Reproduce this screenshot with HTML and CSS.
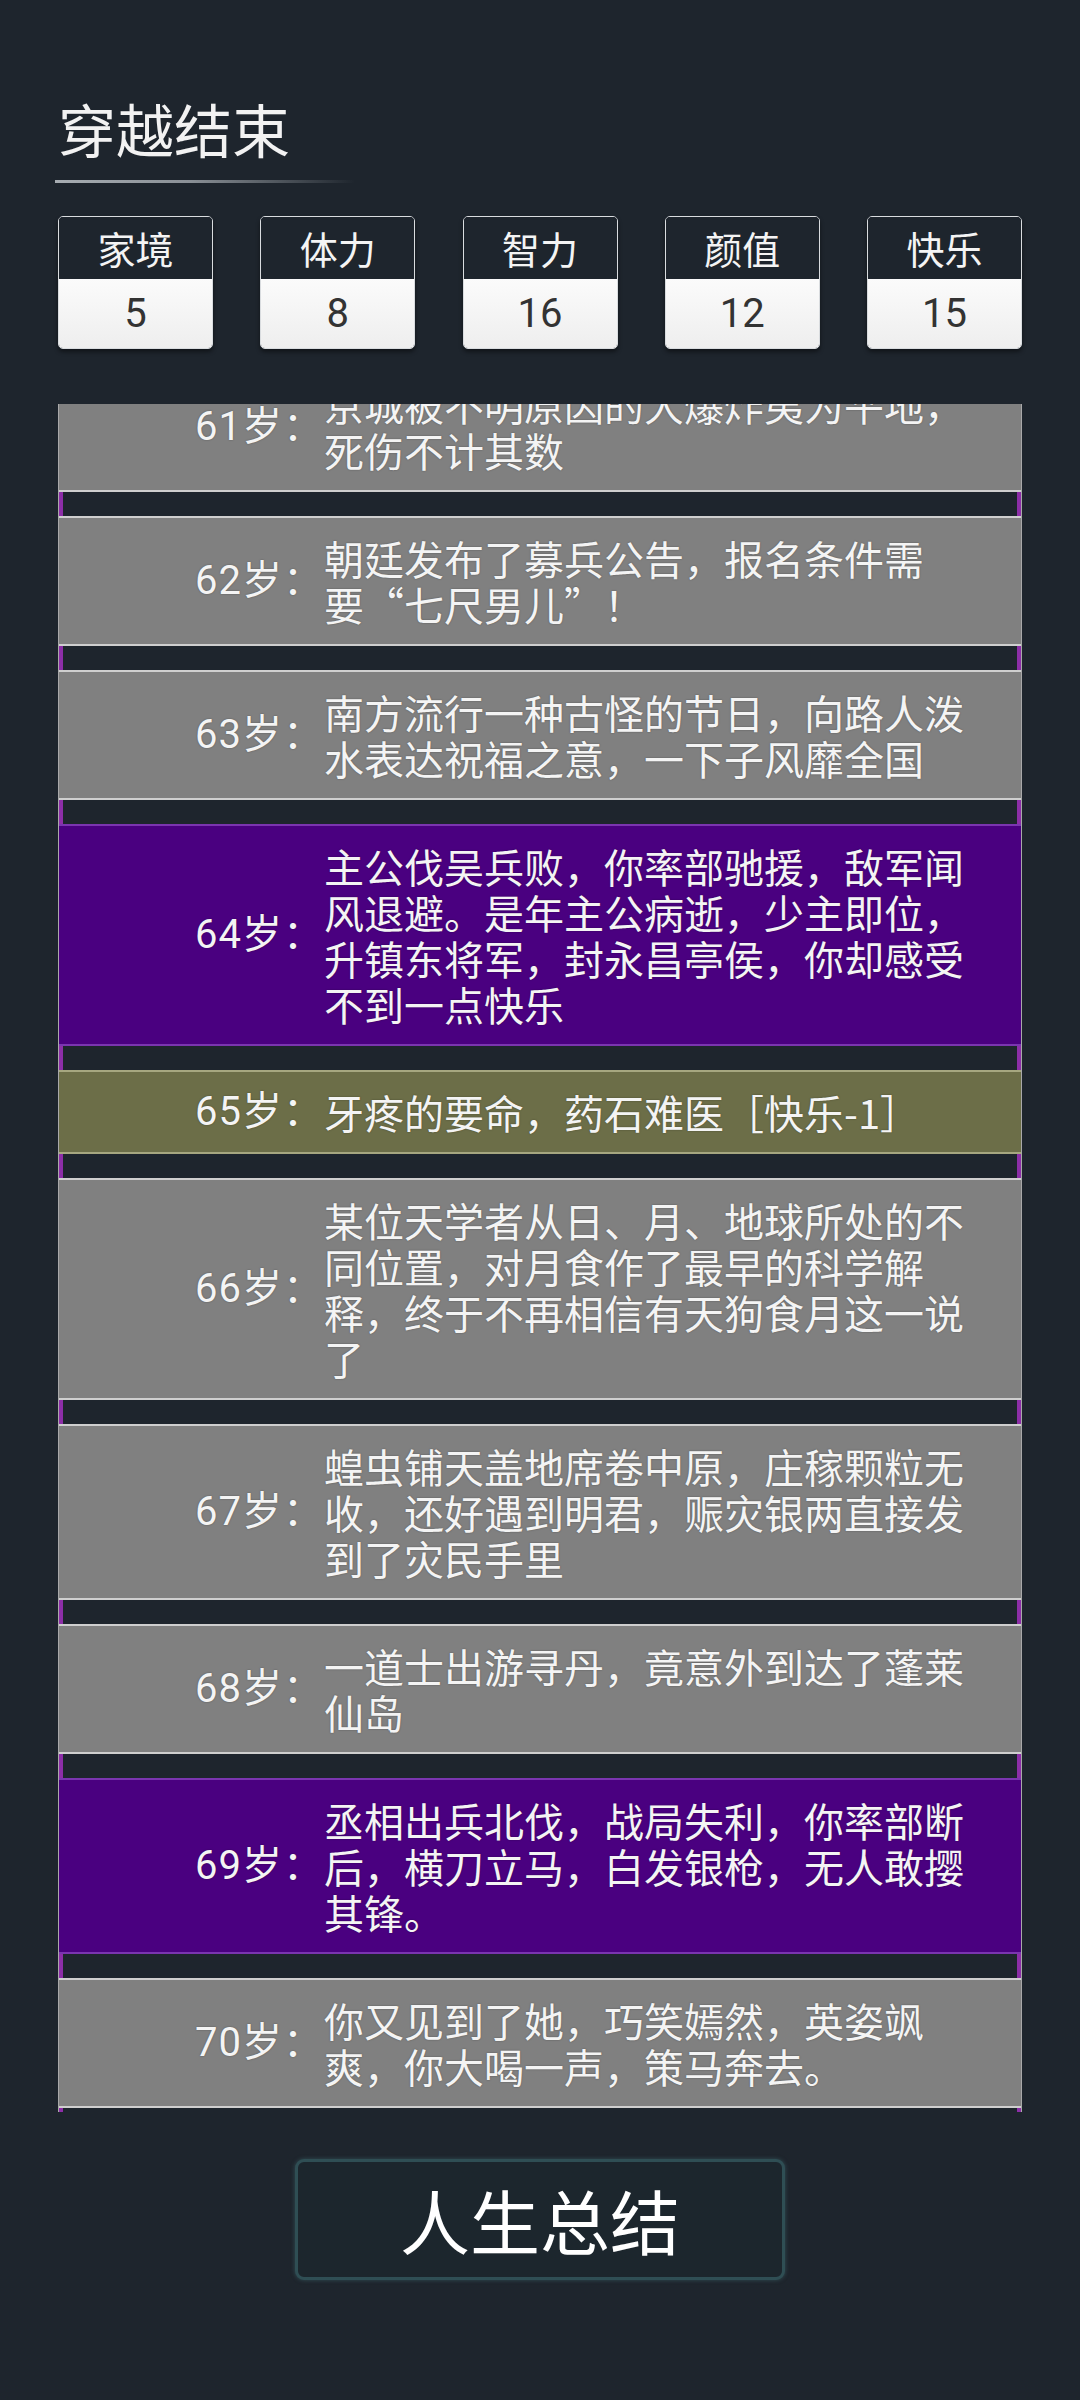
FILE: index.html
```html
<!DOCTYPE html>
<html lang="zh-CN">
<head>
<meta charset="utf-8">
<title>穿越结束</title>
<link rel="stylesheet" href="styles.css">
</head>
<body>
<div class="page">
  <header class="head">
    <h1 class="title">穿越结束</h1>
    <div class="title-line"></div>
  </header>

  <section class="stats">
    <div class="stat"><div class="stat-label">家境</div><div class="stat-value">5</div></div>
    <div class="stat"><div class="stat-label">体力</div><div class="stat-value">8</div></div>
    <div class="stat"><div class="stat-label">智力</div><div class="stat-value">16</div></div>
    <div class="stat"><div class="stat-label">颜值</div><div class="stat-value">12</div></div>
    <div class="stat"><div class="stat-label">快乐</div><div class="stat-value">15</div></div>
  </section>

  <section class="log">
    <ul class="log-list">
      <li class="ev"><span class="age">61岁：</span><span class="txt">京城被不明原因的大爆炸夷为平地，死伤不计其数</span></li>
      <li class="ev"><span class="age">62岁：</span><span class="txt">朝廷发布了募兵公告，报名条件需<br>要“七尺男儿”！</span></li>
      <li class="ev"><span class="age">63岁：</span><span class="txt">南方流行一种古怪的节日，向路人泼水表达祝福之意，一下子风靡全国</span></li>
      <li class="ev ev-purple"><span class="age">64岁：</span><span class="txt">主公伐吴兵败，你率部驰援，敌军闻风退避。是年主公病逝，少主即位，升镇东将军，封永昌亭侯，你却感受不到一点快乐</span></li>
      <li class="ev ev-olive"><span class="age">65岁：</span><span class="txt">牙疼的要命，药石难医［快乐-1］</span></li>
      <li class="ev"><span class="age">66岁：</span><span class="txt">某位天学者从日、月、地球所处的不同位置，对月食作了最早的科学解释，终于不再相信有天狗食月这一说了</span></li>
      <li class="ev"><span class="age">67岁：</span><span class="txt">蝗虫铺天盖地席卷中原，庄稼颗粒无收，还好遇到明君，赈灾银两直接发到了灾民手里</span></li>
      <li class="ev"><span class="age">68岁：</span><span class="txt">一道士出游寻丹，竟意外到达了蓬莱仙岛</span></li>
      <li class="ev ev-purple"><span class="age">69岁：</span><span class="txt">丞相出兵北伐，战局失利，你率部断后，横刀立马，白发银枪，无人敢撄其锋。</span></li>
      <li class="ev"><span class="age">70岁：</span><span class="txt">你又见到了她，巧笑嫣然，英姿飒爽，你大喝一声，策马奔去。</span></li>
    </ul>
  </section>

  <div class="actions">
    <button class="summary-btn">人生总结</button>
  </div>
</div>
</body>
</html>
```

FILE: styles.css
```css
* { box-sizing: border-box; }

html, body {
  margin: 0;
  padding: 0;
}

body {
  width: 1080px;
  height: 2400px;
  background: #1e252d;
  font-family: Roboto, "Noto Sans CJK SC", "Noto Sans", sans-serif;
  color: #f2f2f2;
  overflow: hidden;
}

.page {
  padding: 98px 58px 0 58px;
  display: flex;
  flex-direction: column;
}

.head {
  display: flex;
  flex-direction: column;
}

.title {
  margin: 0;
  font-size: 58px;
  line-height: 70px;
  font-weight: 400;
  color: #f2f2f2;
}

.title-line {
  margin-top: 12px;
  width: 300px;
  height: 3px;
  margin-left: -3px;
  background: linear-gradient(to right, #a7adb2 0%, #8a9096 45%, rgba(138,144,150,0) 100%);
}

.stats {
  margin-top: 33px;
  display: flex;
  justify-content: space-between;
}

.stat {
  width: 155px;
  height: 133px;
  display: flex;
  flex-direction: column;
  border: 1px solid #d9dcdf;
  border-radius: 5px;
  overflow: hidden;
  box-shadow: 0 3px 4px rgba(0,0,0,0.45);
}

.stat-label {
  height: 62px;
  background: #1e252d;
  color: #f4f4f4;
  font-size: 38px;
  display: flex;
  align-items: center;
  justify-content: center;
  padding-bottom: 2px;
}

.stat-value {
  flex: 1;
  background: linear-gradient(to bottom, #fbfbfb, #eeeeee);
  color: #333;
  font-size: 40px;
  display: flex;
  align-items: center;
  justify-content: center;
}

.log {
  margin-top: 55px;
  height: 1708px;
  overflow: hidden;
  border-left: 1px solid #a9a9a9;
  border-right: 1px solid #a9a9a9;
  box-shadow: inset 4px 0 0 #8d2ea8, inset -4px 0 0 #8d2ea8;
}

.log-list {
  list-style: none;
  margin: -42px 0 0 0;
  padding: 0;
  display: flex;
  flex-direction: column;
  gap: 24px;
}

.ev {
  display: flex;
  align-items: center;
  background: #808080;
  border-top: 2px solid #cfcfcf;
  border-bottom: 2px solid #cfcfcf;
  padding: 17px 0;
  font-size: 40px;
  line-height: 46px;
  color: #f4f4f4;
  text-shadow: 0 0 2px rgba(0,0,0,0.35);
}

.ev-purple {
  background: #4a0080;
  border-top-color: #7b35b0;
  border-bottom-color: #7b35b0;
}

.ev-olive {
  background: #6c6e48;
  border-top-color: #a6a780;
  border-bottom-color: #a6a780;
}

.age {
  width: 265px;
  flex: none;
  text-align: right;
  white-space: nowrap;
  letter-spacing: 1px;
}

.txt {
  width: 660px;
  flex: none;
  font-family: "Noto Sans CJK SC", Roboto, sans-serif;
}

.actions {
  margin-top: 47px;
  display: flex;
  justify-content: center;
}

.summary-btn {
  width: 490px;
  height: 121px;
  background: #1c262d;
  border: 3px solid #2f4e54;
  border-radius: 9px;
  box-shadow: 0 0 4px rgba(70,120,125,0.5);
  color: #ffffff;
  font-family: Roboto, "Noto Sans CJK SC", sans-serif;
  font-size: 70px;
  font-weight: 400;
  padding: 0;
  cursor: pointer;
}
```
